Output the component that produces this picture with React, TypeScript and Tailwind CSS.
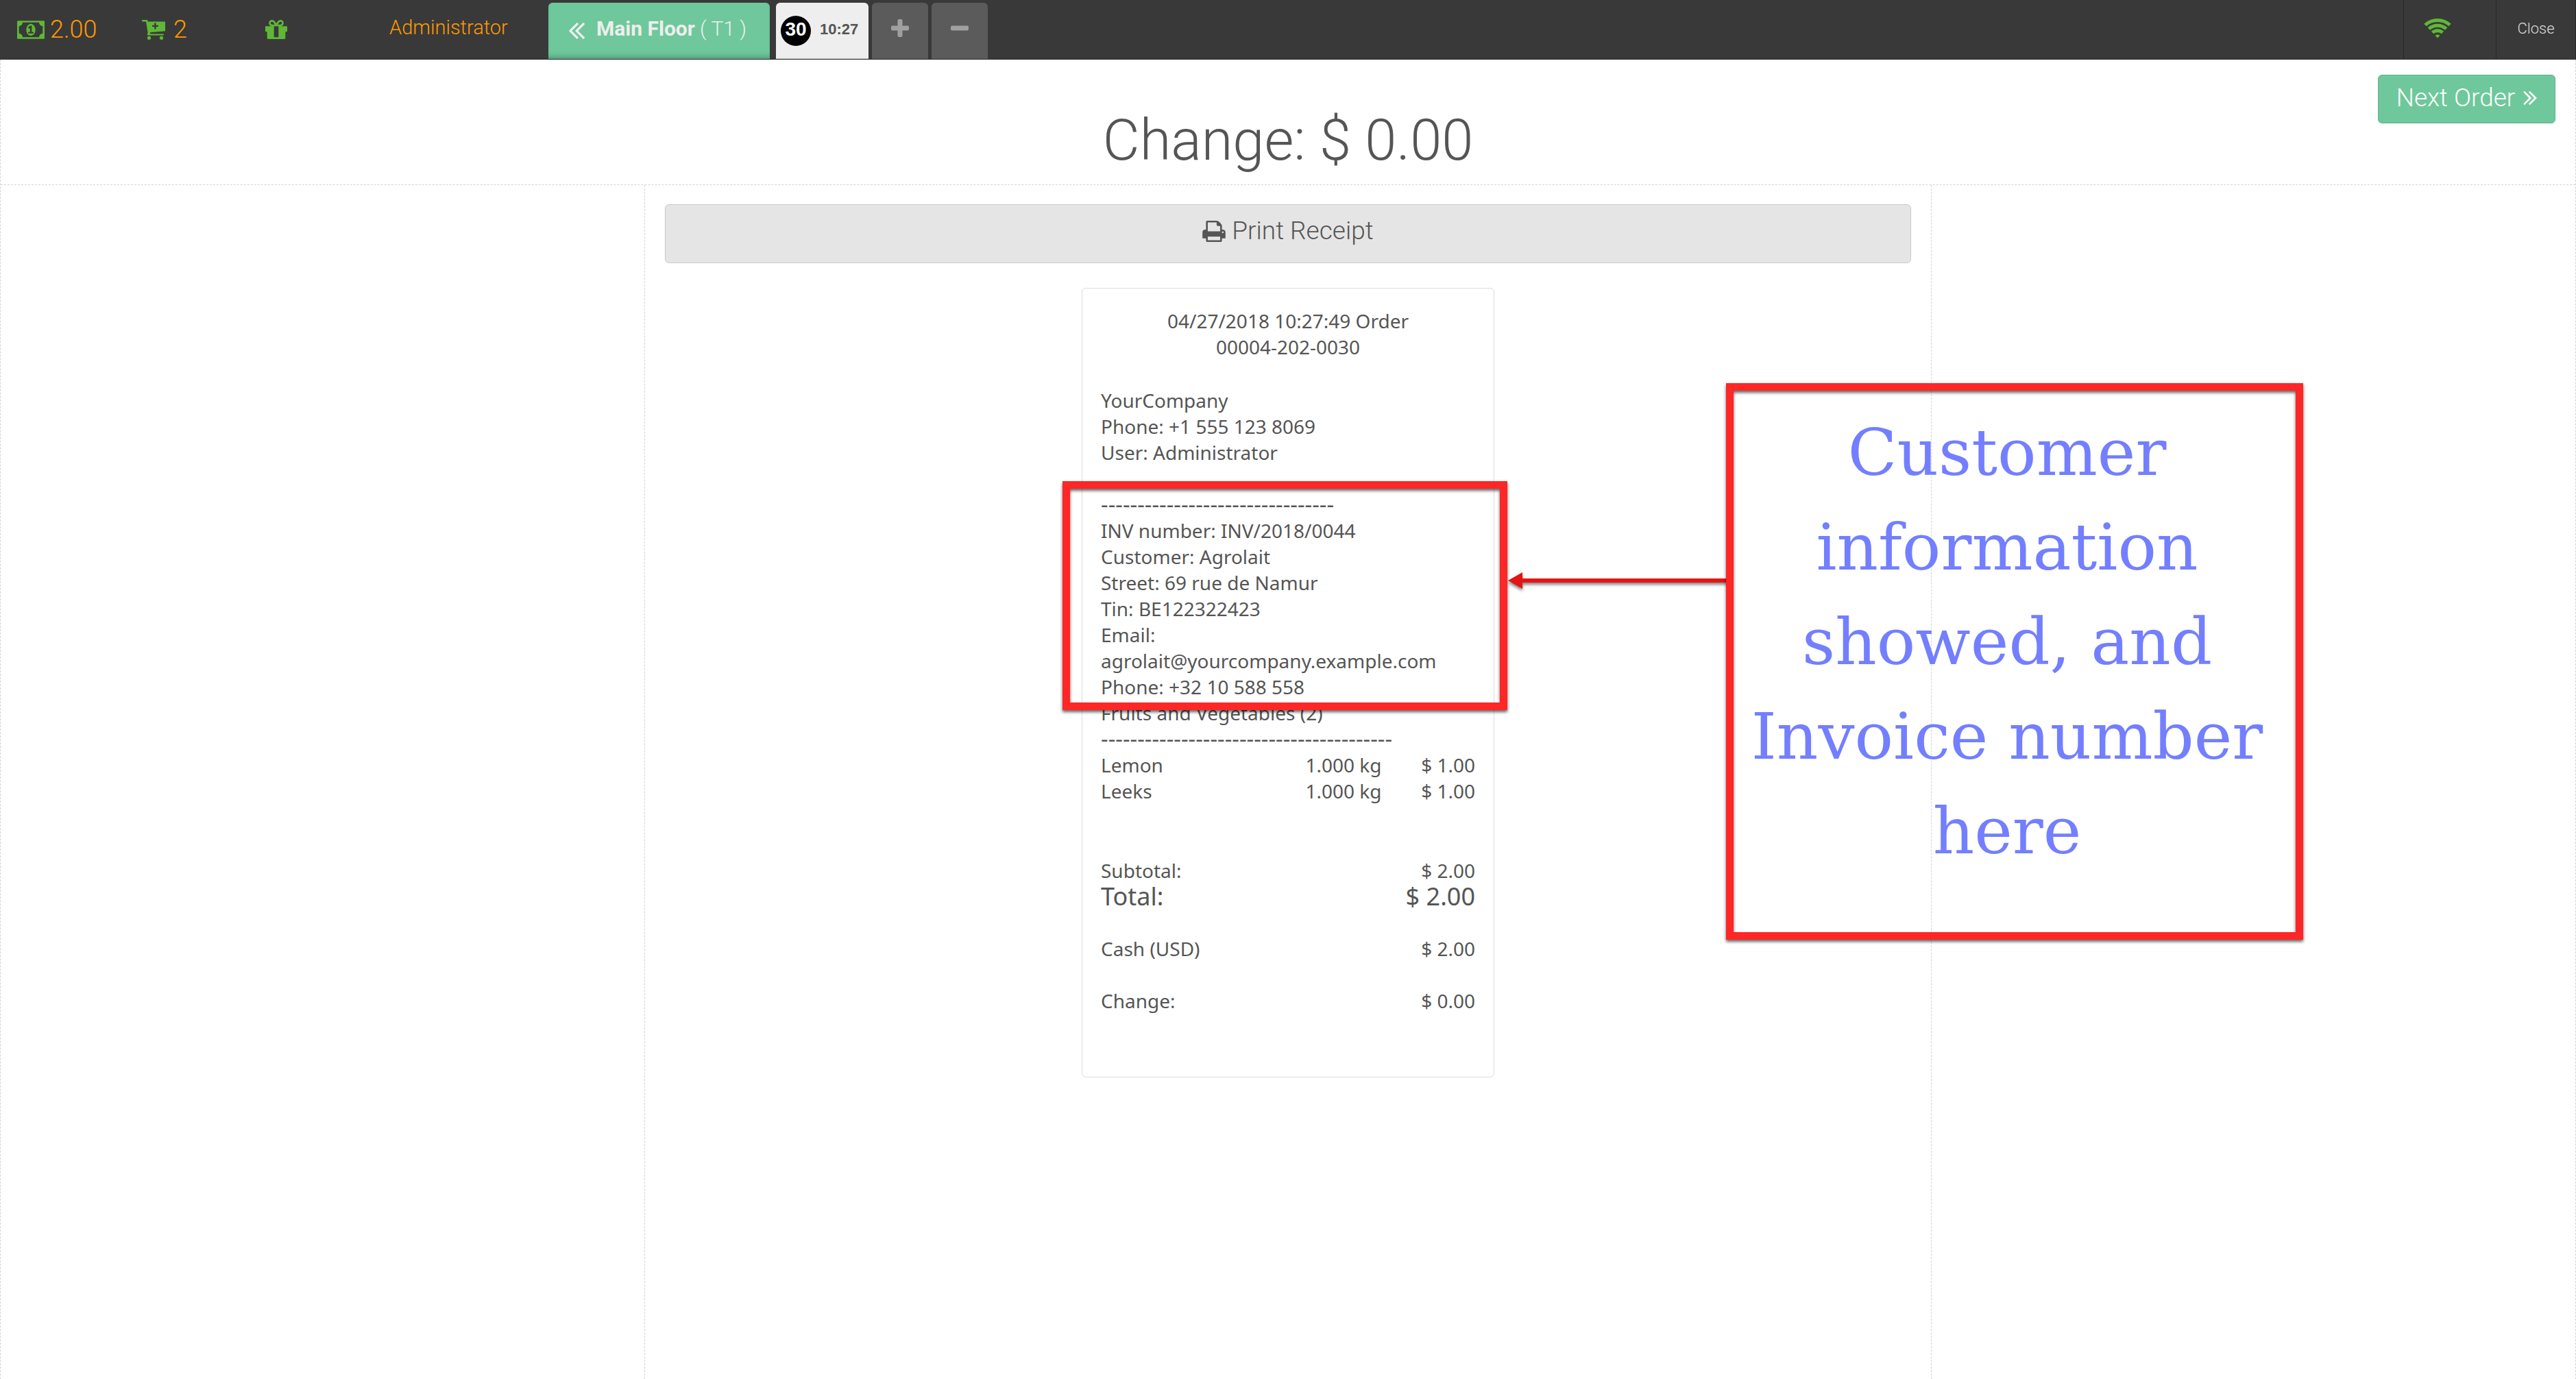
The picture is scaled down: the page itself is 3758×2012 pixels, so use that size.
function MoneyIcon() {
  return (
    <svg viewBox="0 0 1920 1280" className="h-[27px] w-10 fill-[#5fb737]" aria-hidden="true">
      <path d="M768 896h384v-96h-128V352H910L762 489l77 80q42-37 55-57h2v288H768v96zm512-256q0 70-21 142t-59.500 134-101.500 101-138 39-138-39-101.500-101T661 782t-21-142 21-142 59.500-134T822 263t138-39 138 39 101.500 101 59.500 134 21 142zm512 256V384q-106 0-181-75t-75-181H384q0 106-75 181t-181 75v512q106 0 181 75t75 181h1152q0-106 75-181t181-75zm128-832v1152q0 26-19 45t-45 19H64q-26 0-45-19t-19-45V64q0-26 19-45T64 0h1792q26 0 45 19t19 45z" />
    </svg>
  );
}

function CartIcon() {
  return (
    <svg viewBox="0 0 34 29" className="h-[29px] w-[34px]" aria-hidden="true">
      <path
        fill="#5fb737"
        fillRule="evenodd"
        d="M1 0h6q1.200 0 1.400 1l.3 1.500H33q1 0 1 1v12q0 1-1 1.100L12 18.300l.3 2.200H31q1 0 1 1t-1 1H9q-1.200 0-1.200-1.200 0-.5.9-2.300L6 2.400H1q-1 0-1-1.200T1 0zM18.200 4.500v3.200H15v2.400h3.200v3.300h2.400v-3.300h3.200V7.700h-3.200V4.500z"
      />
      <circle cx="10.500" cy="26.300" r="2.600" fill="#5fb737" />
      <circle cx="28.500" cy="26.300" r="2.600" fill="#5fb737" />
    </svg>
  );
}

function GiftIcon() {
  return (
    <svg viewBox="128 192 1536 1344" className="h-[28px] w-8 fill-[#5fb737]" aria-hidden="true">
      <path d="M1056 1356V640H736v716q0 25 18 38.500t46 13.500h192q28 0 46-13.500t18-38.500zM600 512h195L669 351q-26-31-69-31-40 0-68 28t-28 68 28 68 68 28zm688-96q0-40-28-68t-68-28q-43 0-69 31L998 512h194q40 0 68-28t28-68zm376 256v320q0 14-9 23t-23 9h-96v416q0 40-28 68t-68 28H352q-40 0-68-28t-28-68v-416h-96q-14 0-23-9t-9-23V672q0-14 9-23t23-9h440q-93 0-158.500-65.500T376 416t65.500-158.500T600 192q107 0 168 77l128 165 128-165q61-77 168-77 93 0 158.500 65.500T1416 416t-65.500 158.500T1192 640h440q14 0 23 9t9 23z" />
    </svg>
  );
}

function DoubleAngle({ className }: { className: string }) {
  return (
    <svg viewBox="429 461 966 998" className={className} fill="currentColor" aria-hidden="true">
      <path d="M1011 1376q0 13-10 23l-50 50q-10 10-23 10t-23-10L439 983q-10-10-10-23t10-23l466-466q10-10 23-10t23 10l50 50q10 10 10 23t-10 23L608 960l393 393q10 10 10 23zm384 0q0 13-10 23l-50 50q-10 10-23 10t-23-10L823 983q-10-10-10-23t10-23l466-466q10-10 23-10t23 10l50 50q10 10 10 23t-10 23L992 960l393 393q10 10 10 23z" />
    </svg>
  );
}

function PrintIcon() {
  return (
    <svg viewBox="64 128 1664 1536" className="h-[31px] w-[34px]" fill="currentColor" aria-hidden="true">
      <path d="M448 1536h896v-256H448v256zm0-640h896V512h-160q-40 0-68-28t-28-68V256H448v640zm1152 64q0-26-19-45t-45-19-45 19-19 45 19 45 45 19 45-19 19-45zm128 0v416q0 13-9.500 22.500t-22.500 9.500h-224v160q0 40-28 68t-68 28H416q-40 0-68-28t-28-68v-160H96q-13 0-22.500-9.500T64 1376V960q0-79 56.500-135.500T256 768h64V224q0-40 28-68t68-28h672q40 0 88 20t76 48l152 152q28 28 48 76t20 88v256h64q79 0 135.500 56.500T1728 960z" />
    </svg>
  );
}

function WifiIcon() {
  return (
    <svg viewBox="0 0 40 30" className="h-[30px] w-10" aria-hidden="true">
      <g fill="none" stroke="#5fb737" strokeWidth="5">
        <path d="M2 10.500a27 27 0 0 1 36 0" />
        <path d="M7.300 16a19 19 0 0 1 25.400 0" />
        <path d="M12.600 21.500a11 11 0 0 1 14.800 0" />
      </g>
      <path d="M16.500 25.800q3.500-2.800 7 0L20 29.500z" fill="#5fb737" />
    </svg>
  );
}

function SignIcon({ plus }: { plus?: boolean }) {
  return (
    <svg viewBox="0 0 26 26" className="size-[26px] fill-[#a0a0a0]" aria-hidden="true">
      <rect x="0" y="9.500" width="26" height="7" rx="2" />
      {plus && <rect x="9.500" y="0" width="7" height="26" rx="2" />}
    </svg>
  );
}

function TopBar() {
  return (
    <header className="flex h-[87px] items-stretch border-b border-[#2e2e2e] bg-[#393939]">
      <div className="flex w-[800px] items-center text-[36px] text-[#ff9900]">
        <div className="flex w-[182px] items-center gap-2 pl-[25px]">
          <MoneyIcon />
          <span>2.00</span>
        </div>
        <div className="flex w-[205px] items-center gap-3 pl-[25px]">
          <CartIcon />
          <span>2</span>
        </div>
        <div className="w-[181px]">
          <GiftIcon />
        </div>
        <button type="button" className="pb-1 text-[29px]">Administrator</button>
      </div>
      <nav className="flex items-end">
        <button type="button" className="mr-[9px] flex h-[82px] w-[323px] items-center gap-[17px] rounded-t-md bg-[#6ec89b] pb-2 pl-[30px] text-[30px] text-[#eeeeee] shadow-[inset_0_-8px_10px_-6px_rgba(0,0,0,0.3)]">
          <DoubleAngle className="mt-2 h-6 w-[23px]" />
          <span>
            <b className="font-bold">Main Floor</b> ( T1 )
          </span>
        </button>
        <button type="button" className="mr-[5px] flex h-[82px] w-[135px] items-center gap-[13px] rounded-t-md border-b border-[#c4c4c4] bg-[#eeeeee] pl-[7px] font-[Liberation_Sans,sans-serif] text-[22px] font-bold text-[#555555]">
          <span className="flex size-11 items-center justify-center rounded-full bg-black pb-1 text-[28px] text-white">30</span>
          <span className="pb-1">10:27</span>
        </button>
        <button type="button" aria-label="New order" className="mr-[5px] flex h-[82px] w-[82px] items-center justify-center rounded-t-md bg-[#5b5b5b] pb-2">
          <SignIcon plus />
        </button>
        <button type="button" aria-label="Delete order" className="flex h-[82px] w-[82px] items-center justify-center rounded-t-md bg-[#5b5b5b] pb-2">
          <SignIcon />
        </button>
      </nav>
      <div className="ml-auto flex">
        <div className="flex w-[135px] items-center border-l border-[#292929] pb-1 pl-[29px]">
          <WifiIcon />
        </div>
        <button type="button" className="w-[117px] border-x border-[#292929] pb-1 text-[22px] text-[#dddddd]">Close</button>
      </div>
    </header>
  );
}

const CUSTOMER = [
  "INV number: INV/2018/0044",
  "Customer: Agrolait",
  "Street: 69 rue de Namur",
  "Tin: BE122322423",
  "Email:",
  "agrolait@yourcompany.example.com",
  "Phone: +32 10 588 558",
];

const LINES = [
  { name: "Lemon", qty: "1.000 kg", price: "$ 1.00" },
  { name: "Leeks", qty: "1.000 kg", price: "$ 1.00" },
];

function Rule({ count }: { count: number }) {
  return <p className="h-[38px] whitespace-nowrap text-[33px] leading-[38px]">{"-".repeat(count)}</p>;
}

function Row({ label, value, big }: { label: string; value: string; big?: boolean }) {
  return (
    <tr className={big ? "text-[36px] leading-[38px]" : ""}>
      <th scope="row" className="p-0 text-left font-normal">{label}</th>
      <td className="p-0 text-right">{value}</td>
    </tr>
  );
}

function Annotation() {
  return (
    <>
      <div className="absolute -left-[29px] top-[281px] h-[334px] w-[649px] border-[11px] border-[#ff2626] drop-shadow-[0_3px_2px_rgba(0,0,0,0.6)]" />
      <svg viewBox="0 0 320 32" className="absolute left-[621px] top-[410px] h-8 w-[320px] drop-shadow-[0_3px_2px_rgba(0,0,0,0.5)]" aria-hidden="true">
        <path d="M0 16 21 4v9h299v6H21v9z" fill="#e31515" />
      </svg>
      <div className="absolute left-[939px] top-[138px] h-[812px] w-[842px] border-[11px] border-[#ff2626] drop-shadow-[0_3px_2px_rgba(0,0,0,0.6)]" />
      <p className="absolute left-[939px] top-[171px] w-[820px] text-center font-[DejaVu_Serif,serif] text-[94px] leading-[138px] text-[#737fff]">
        Customer information showed, and Invoice number here
      </p>
    </>
  );
}

function Receipt() {
  return (
    <article className="relative mx-auto mt-9 w-[602px] rounded-md border border-[#dcdcdc] px-[27px] pb-[92px] pt-[28px] font-[Noto_Sans,sans-serif] text-[28px] font-normal leading-[38px]">
      <p className="mx-auto w-[400px] text-center">04/27/2018 10:27:49 Order 00004-202-0030</p>
      <div className="mt-10">
        <p>YourCompany</p>
        <p>Phone: +1 555 123 8069</p>
        <p>User: Administrator</p>
      </div>
      <div className="mt-[38px]">
        <Rule count={32} />
        {CUSTOMER.map((text) => (
          <p key={text}>{text}</p>
        ))}
        <p>Fruits and Vegetables (2)</p>
        <Rule count={40} />
      </div>
      <table className="w-full table-fixed">
        <tbody>
          {LINES.map((l) => (
            <tr key={l.name}>
              <td className="w-1/2 p-0">{l.name}</td>
              <td className="w-1/4 p-0 text-right">{l.qty}</td>
              <td className="w-1/4 p-0 text-right">{l.price}</td>
            </tr>
          ))}
        </tbody>
      </table>
      <table className="mt-[78px] w-full">
        <tbody>
          <Row label="Subtotal:" value="$ 2.00" />
          <Row label="Total:" value="$ 2.00" big />
        </tbody>
      </table>
      <table className="mt-[38px] w-full">
        <tbody>
          <Row label="Cash (USD)" value="$ 2.00" />
        </tbody>
      </table>
      <table className="mt-[38px] w-full">
        <tbody>
          <Row label="Change:" value="$ 0.00" />
        </tbody>
      </table>
      <Annotation />
    </article>
  );
}

export default function App() {
  return (
    <div className="flex min-h-screen flex-col bg-white font-[Roboto,sans-serif] font-light text-[#555555]">
      <TopBar />
      <div className="flex grow flex-col border-x border-dashed border-[#d4d4d4]">
        <div className="relative border-b border-dashed border-[#d4d4d4] pb-[14px] pt-[68px]">
          <h1 className="text-center text-[83px] leading-[100px]">Change: $ 0.00</h1>
          <button type="button" className="absolute right-[29px] top-[22px] flex h-[71px] w-[259px] items-center justify-center gap-3 rounded-md border border-[#64af8a] bg-[#6ec89b] pb-1 text-[37px] text-white">
            Next Order <DoubleAngle className="h-5 w-[20px] -scale-x-100" />
          </button>
        </div>
        <main className="mx-auto w-1/2 grow border-x border-dashed border-[#d4d4d4] px-[29px] pt-7">
          <button type="button" className="flex h-[86px] w-full items-center justify-center gap-[9px] rounded-md border border-[#cacaca] bg-[#e5e5e5] pb-2 text-[37px]">
            <PrintIcon /> Print Receipt
          </button>
          <Receipt />
        </main>
      </div>
    </div>
  );
}
